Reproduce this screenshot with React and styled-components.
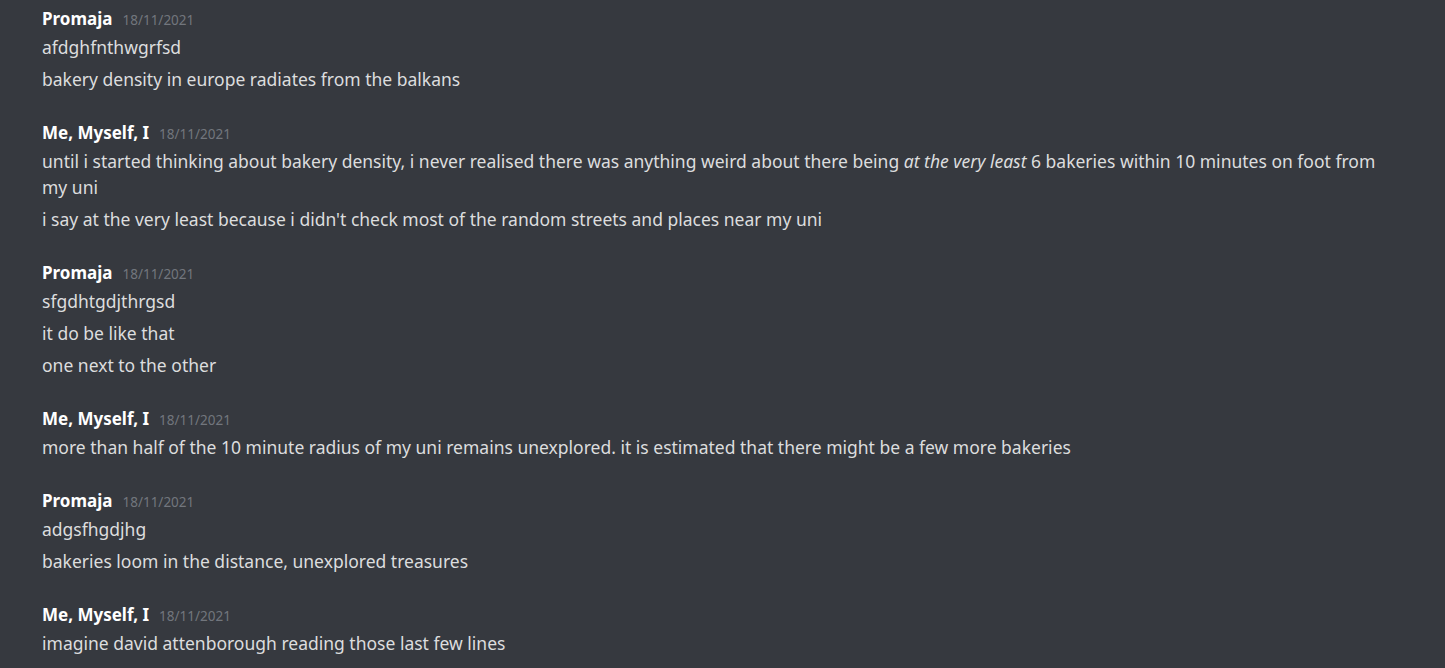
import React from "react";
import styled, { createGlobalStyle } from "styled-components";

const GlobalStyle = createGlobalStyle`
  html, body {
    margin: 0;
    padding: 0;
    background-color: #36393f;
  }
  body {
    font-family: "Noto Sans", "Open Sans", sans-serif;
  }
`;

const Chat = styled.div`
  background-color: #36393f;
  min-height: 100vh;
  box-sizing: border-box;
  padding: 8px 48px 0 42px;
  display: flex;
  flex-direction: column;
  gap: 27px;
`;

const Group = styled.div`
  display: flex;
  flex-direction: column;
`;

const Header = styled.div`
  display: flex;
  align-items: baseline;
  gap: 10px;
  line-height: 22px;
`;

const Author = styled.span`
  font-size: 17px;
  font-weight: 700;
  color: #ffffff;
`;

const Stamp = styled.span`
  font-size: 13.5px;
  color: #72767d;
`;

const Line = styled.div`
  padding: 3px 0;
  font-size: 17.5px;
  line-height: 26px;
  color: #dcddde;
`;

const messages = [
  {
    author: "Promaja",
    lines: ["afdghfnthwgrfsd", "bakery density in europe radiates from the balkans"],
  },
  {
    author: "Me, Myself, I",
    lines: [
      <>
        until i started thinking about bakery density, i never realised there was anything weird about there being{" "}
        <em>at the very least</em> 6 bakeries within 10 minutes on foot from my uni
      </>,
      "i say at the very least because i didn't check most of the random streets and places near my uni",
    ],
  },
  {
    author: "Promaja",
    lines: ["sfgdhtgdjthrgsd", "it do be like that", "one next to the other"],
  },
  {
    author: "Me, Myself, I",
    lines: [
      "more than half of the 10 minute radius of my uni remains unexplored. it is estimated that there might be a few more bakeries",
    ],
  },
  {
    author: "Promaja",
    lines: ["adgsfhgdjhg", "bakeries loom in the distance, unexplored treasures"],
  },
  {
    author: "Me, Myself, I",
    lines: ["imagine david attenborough reading those last few lines"],
  },
];

const App = () => {
  return (
    <>
      <GlobalStyle />
      <Chat>
        {messages.map((m, i) => (
          <Group key={i}>
            <Header>
              <Author>{m.author}</Author>
              <Stamp>18/11/2021</Stamp>
            </Header>
            {m.lines.map((l, j) => (
              <Line key={j}>{l}</Line>
            ))}
          </Group>
        ))}
      </Chat>
    </>
  );
};

export default App;
